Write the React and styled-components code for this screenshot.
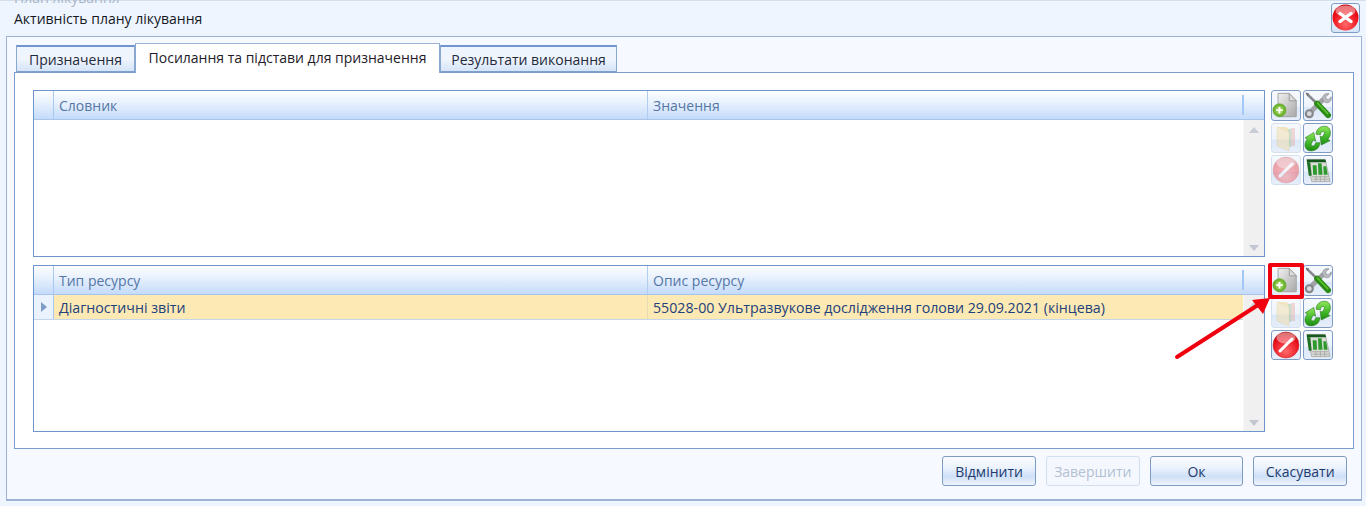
import React from "react";
import styled, { createGlobalStyle } from "styled-components";

const Global = createGlobalStyle`
  html, body { margin: 0; padding: 0; height: 100%; overflow: hidden; background: #eef5fe; }
  * { box-sizing: border-box; }
  body { font-family: "Open Sans", "Noto Sans", "Liberation Sans", sans-serif; }
`;

const Windowed = styled.div`
  position: relative; width: 1366px; height: 506px; display: flex; flex-direction: column;
  padding: 0 4px 5px 6px; background: #eef5fe; overflow: hidden;
`;
const Ghost = styled.div`
  position: absolute; left: 14px; top: -12px; font-size: 14px; color: #aab4c3;
`;
const TitleBar = styled.div`
  height: 36px; flex: none; display: flex; align-items: center; justify-content: space-between;
  border-top: 1px solid #d4dfee; margin: 0 -4px 0 -6px; padding: 3px 6px 3px 14px;
`;
const Title = styled.div` font-size: 14px; color: #15181f; `;
const CloseButton = styled.div`
  width: 29px; height: 30px; margin-top: -2px; border: 1px solid #7f9cc4; border-radius: 3px; display: flex; align-items: center; justify-content: center;
  background: linear-gradient(#f4f8fe, #d7e5f8);
`;
const Frame = styled.div`
  flex: 1; display: flex; flex-direction: column; border: 1px solid #9db3d3; border-bottom-width: 2px; background: #f6f9ff;
  padding: 7px 7px 0 7px;
`;
const TabStrip = styled.div` height: 28px; flex: none; display: flex; align-items: flex-end; padding-left: 2px; position: relative; z-index: 1; `;
const Tab = styled.div`
  height: ${p => (p.$active ? "30px" : "27px")};
  margin-bottom: ${p => (p.$active ? "-1px" : "0")};
  width: ${p => p.$w}px; display: flex; align-items: center; justify-content: center;
  font-size: 14px; color: ${p => (p.$active ? "#241a28" : "#1e2a3c")};
  background: ${p => (p.$active ? "#fff" : "linear-gradient(#eef4fd 0%, #f0f5fd 50%, #d5e4f8 100%)")};
  border: 1px solid #8aa9d0; border-top: ${p => (p.$active ? "1px solid #9cb4d3" : "2px solid #7097cb")};
  border-bottom: ${p => (p.$active ? "0" : "1px solid #7ea0cc")};
  padding-bottom: ${p => (p.$active ? "3px" : "0")};
`;
const Panel = styled.div`
  height: 377px; flex: none; background: #fff; border: 1px solid #7a9ccb; padding: 17px 20px 0 18px;
  display: flex; flex-direction: column; gap: 8px;
`;
const GridRow = styled.div` display: flex; gap: 6px; height: 167px; flex: none; `;
const Grid = styled.div`
  width: 1232px; flex: none; border: 1px solid #6f96cb; display: flex; flex-direction: column; background: #fff;
`;
const Header = styled.div`
  height: 29px; flex: none; display: flex; align-items: stretch; border-bottom: 1px solid #a9c5ea;
  background: linear-gradient(#fdfeff 0%, #e6f0fd 45%, #c4dbfa 100%);
`;
const Indicator = styled.div`
  width: 20px; flex: none; display: flex; align-items: center; justify-content: center;
  background: ${p => (p.$row ? "#eaf2fd" : "transparent")};
  border-right: 1px solid #a9c8f0;
`;
const Arrowhead = styled.div`
  width: 0; height: 0; border-left: 6px solid #7f9cc6; border-top: 5px solid transparent; border-bottom: 5px solid transparent;
`;
const HeadCell = styled.div`
  width: ${p => p.$w}px; flex: none; padding-left: 5px; display: flex; align-items: center; font-size: 14px; color: #5676a5;
  border-right: ${p => (p.$sep ? "1px solid #b3cdf0" : "0")};
`;
const HeadEnd = styled.div`
  width: 2px; height: 20px; align-self: center; background: #a4c8f6;
`;
const Body = styled.div` flex: 1; display: flex; min-height: 0; `;
const Rows = styled.div` flex: 1; min-width: 0; `;
const Scrollbar = styled.div`
  width: 21px; flex: none; background: #f0f0f0; border-left: 1px solid #f7f7f7; display: flex; flex-direction: column;
  align-items: center; justify-content: space-between; padding: 7px 0 5px;
`;
const ScrollArrow = styled.div`
  width: 0; height: 0; border-left: 5px solid transparent; border-right: 5px solid transparent;
  ${p => (p.$up ? "border-bottom: 6px solid #c7ccd6;" : "border-top: 6px solid #c2c7d2;")}
`;
const Row = styled.div`
  height: 25px; display: flex; align-items: stretch; background: #fde9b3; border-bottom: 1px solid #c5d5ea;
  font-size: 14.2px; color: #21407c;
`;
const Cell = styled.div`
  width: ${p => p.$w}px; flex: none; padding: 1px 0 0 5px; display: flex; align-items: center; white-space: nowrap;
  border-right: ${p => (p.$sep ? "1px solid #e6d9b4" : "0")};
`;
const Tools = styled.div`
  display: grid; grid-template-columns: 30px 30px; grid-template-rows: 31px 30px 30px; column-gap: 2px; row-gap: 2px; align-content: start;
`;
const ToolButton = styled.div`
  border: 1px solid ${p => (p.$off ? "#d5e0ef" : "#7f9cc4")}; border-radius: 3px; display: flex; align-items: center; justify-content: center;
  background: linear-gradient(#f6f9fe 0%, #eef4fc 55%, #dce8f8 56%, #e6eefa 100%);
  svg { opacity: ${p => (p.$off ? 0.36 : 1)}; }
`;
const Footer = styled.div`
  flex: 1; display: flex; justify-content: flex-end; align-items: flex-start; gap: 10px; padding: 7px 7px 0 0;
`;
const Btn = styled.div`
  width: 93.7px; height: 30px; display: flex; align-items: center; justify-content: center; border-radius: 3px;
  font-size: 14px; border: 1px solid ${p => (p.$off ? "#d3dfee" : "#7c9cc2")};
  color: ${p => (p.$off ? "#b3bfd2" : "#1d3a6e")};
  background: ${p => (p.$off ? "#f4f8fe" : "linear-gradient(#f8fbff 0%, #eef4fd 35%, #cfe0f7 70%, #eef4fd 100%)")};
`;
const Highlight = styled.div`
  position: absolute; left: 1268px; top: 263px; width: 36px; height: 36px; border: 4px solid #f0000e; border-radius: 2px; pointer-events: none;
`;
const ArrowOverlay = styled.svg` position: absolute; left: 1170px; top: 290px; pointer-events: none; `;

const IconAdd = () => (
  <svg width="30" height="29" viewBox="0 0 30 29">
    <defs>
      <linearGradient id="pg" x1="0" y1="0" x2="1" y2="1"><stop offset="0" stopColor="#f0f0f0" /><stop offset="1" stopColor="#a8a8a8" /></linearGradient>
      <radialGradient id="gg"><stop offset="0" stopColor="#c4ea7e" /><stop offset="1" stopColor="#58a81e" /></radialGradient>
    </defs>
    <path d="M6.5 1.500h12l7.500 8v17H6.500z" fill="url(#pg)" stroke="#a0a0a0" />
    <path d="M18.500 1.500v8h7.500z" fill="#dcdcdc" stroke="#9a9a9a" />
    <circle cx="8" cy="19.500" r="7" fill="url(#gg)" stroke="#6aa82c" strokeWidth=".6" />
    <path d="M8 16v7M4.500 19.500h7" stroke="#fff" strokeWidth="2" />
  </svg>
);
const IconTools = () => (
  <svg width="29" height="29" viewBox="0 0 29 29">
    <path d="M6 22L20 8" stroke="#a0a2a6" strokeWidth="5" />
    <path d="M26 2.500l-3.500 3 .6 2.400 2.400.6 2.600-3c.8 3.600-1.600 6.800-5.400 6-3-.6-4.400-4-3-6.600 1-2.100 3.800-3.400 6.300-2.400z" fill="#b9bbbf" stroke="#7f8185" strokeWidth=".6" />
    <circle cx="5.500" cy="23" r="3.600" fill="#d8dade" stroke="#85878b" strokeWidth="2.200" />
    <path d="M3 2.500L15 14" stroke="#85878c" strokeWidth="2.600" />
    <path d="M1.500 1l3.500.7-1.400 3z" fill="#6f7176" />
    <path d="M13.500 12.500L25 24.500" stroke="#2a8a16" strokeWidth="6" strokeLinecap="round" />
    <path d="M14 12L24.500 23" stroke="#5dbf2c" strokeWidth="1.800" strokeLinecap="round" />
  </svg>
);
const IconFolder = () => (
  <svg width="28" height="28" viewBox="0 0 28 28">
    <path d="M5 3h9l3 2v20L5 21z" fill="#eec45a" />
    <rect x="16" y="5" width="3" height="18" fill="#7ab870" />
    <rect x="19" y="4" width="4" height="18" fill="#e0a090" />
    <path d="M5 3l12 5v19L5 22z" fill="#f6d68a" stroke="#d1a94e" strokeWidth=".5" />
  </svg>
);
const IconRefresh = () => (
  <svg width="30" height="29" viewBox="0 0 30 29">
    <defs><linearGradient id="ag" x1="0" y1="0" x2="0" y2="1"><stop offset="0" stopColor="#8fe85a" /><stop offset=".6" stopColor="#3db426" /><stop offset="1" stopColor="#1d8a14" /></linearGradient></defs>
    <path d="M13 10C13 4 18 .8 23.500 1.500c4.500 1 6 6.500 3.900 11l-1.900 3 2.500 1.200-9.500 4.800-1.200-9.500 2.200 1 2-3.200c.7-1.500.2-2.800-1.300-2.800-1.500 0-2.500 1.500-2.500 3.500z" fill="url(#ag)" stroke="#23731a" strokeWidth=".6" />
    <path d="M17 19c0 5.500-5 9.300-10.500 8.700C1.500 27 0 22.500 1.700 18l2-3-2.500-1.200L10.500 8l2 9.500-2.500-1.500-2 3.500c-.8 1.500 0 3 1.500 3 1.800 0 2.500-1.500 3.200-3.500z" fill="url(#ag)" stroke="#23731a" strokeWidth=".6" />
  </svg>
);
const IconBan = ({ id = "rb" }) => (
  <svg width="28" height="28" viewBox="0 0 28 28">
    <defs>
      <radialGradient id={id} cx=".5" cy=".75" r=".75"><stop offset="0" stopColor="#ff6a6a" /><stop offset=".65" stopColor="#ec1620" /><stop offset="1" stopColor="#b80c12" /></radialGradient>
    </defs>
    <circle cx="14" cy="14" r="13" fill={`url(#${id})`} stroke="#c4282e" strokeWidth=".5" />
    <ellipse cx="14" cy="7" rx="9.500" ry="5.500" fill="#fff" opacity=".42" />
    <path d="M8 20L20 8" stroke="#fff" strokeWidth="3" strokeLinecap="round" />
  </svg>
);
const IconSheet = () => (
  <svg width="29" height="29" viewBox="0 0 29 29">
    <path d="M3 3h19l5 23H8z" fill="#dcddd9" stroke="#8b8c88" strokeWidth=".6" />
    <path d="M3 3h19l1 3H3z" fill="#14591c" />
    <path d="M3 6h3.500l1.500 14H5z" fill="#1f6f24" />
    <path d="M9 9h4l.5 10H9.500zM14.500 7h3.700l1 12h-4.200zM20 10h3l1.500 9h-4z" fill="#2c9a2c" />
    <path d="M8 21h17M9 23.500h17M12.500 20v6M17 20v6M21.500 20v6" stroke="#a5a6a2" strokeWidth=".9" />
  </svg>
);
const IconClose = () => (
  <svg width="27" height="27" viewBox="0 0 27 27">
    <defs>
      <radialGradient id="cg" cx=".5" cy=".75" r=".75"><stop offset="0" stopColor="#ff6a6a" /><stop offset=".65" stopColor="#f0121a" /><stop offset="1" stopColor="#c80a10" /></radialGradient>
    </defs>
    <circle cx="13.500" cy="13.500" r="13" fill="url(#cg)" />
    <ellipse cx="13.500" cy="7" rx="10" ry="5.500" fill="#fff" opacity=".45" />
    <path d="M8 9.500l11 8M19 9.500l-11 8" stroke="#fff" strokeWidth="3.400" strokeLinecap="round" />
  </svg>
);

const ToolSet = ({ banOn, n }) => (
  <Tools>
    <ToolButton><IconAdd /></ToolButton>
    <ToolButton><IconTools /></ToolButton>
    <ToolButton $off><IconFolder /></ToolButton>
    <ToolButton><IconRefresh /></ToolButton>
    <ToolButton $off={!banOn}><IconBan id={`rb${n}`} /></ToolButton>
    <ToolButton><IconSheet /></ToolButton>
  </Tools>
);

const DataGrid = ({ first, second, row }) => (
  <Grid>
    <Header>
      <Indicator />
      <HeadCell $w={594} $sep>{first}</HeadCell>
      <HeadCell $w={594}>{second}</HeadCell>
      <HeadEnd />
    </Header>
    <Body>
      <Rows>
        {row && (
          <Row>
            <Indicator $row><Arrowhead /></Indicator>
            <Cell $w={594} $sep>{row[0]}</Cell>
            <Cell $w={594}>{row[1]}</Cell>
          </Row>
        )}
      </Rows>
      <Scrollbar><ScrollArrow $up /><ScrollArrow /></Scrollbar>
    </Body>
  </Grid>
);

export default function App() {
  return (
    <>
      <Global />
      <Windowed>
        <Ghost>План лікування</Ghost>
        <TitleBar>
          <Title>Активність плану лікування</Title>
          <CloseButton><IconClose /></CloseButton>
        </TitleBar>
        <Frame>
          <TabStrip>
            <Tab $w={119}>Призначення</Tab>
            <Tab $w={305} $active>Посилання та підстави для призначення</Tab>
            <Tab $w={177}>Результати виконання</Tab>
          </TabStrip>
          <Panel>
            <GridRow>
              <DataGrid first="Словник" second="Значення" />
              <ToolSet n={1} />
            </GridRow>
            <GridRow>
              <DataGrid
                first="Тип ресурсу"
                second="Опис ресурсу"
                row={["Діагностичні звіти", "55028-00 Ультразвукове дослідження голови 29.09.2021 (кінцева)"]}
              />
              <ToolSet banOn n={2} />
            </GridRow>
          </Panel>
          <Footer>
            <Btn>Відмінити</Btn>
            <Btn $off>Завершити</Btn>
            <Btn>Ок</Btn>
            <Btn>Скасувати</Btn>
          </Footer>
        </Frame>
        <Highlight />
        <ArrowOverlay width="110" height="75" viewBox="0 0 110 75">
          <path d="M7 67L88 15" stroke="#f0000e" strokeWidth="4" strokeLinecap="round" />
          <path d="M100 8L82 10L93 24Z" fill="#f0000e" />
        </ArrowOverlay>
      </Windowed>
    </>
  );
}
